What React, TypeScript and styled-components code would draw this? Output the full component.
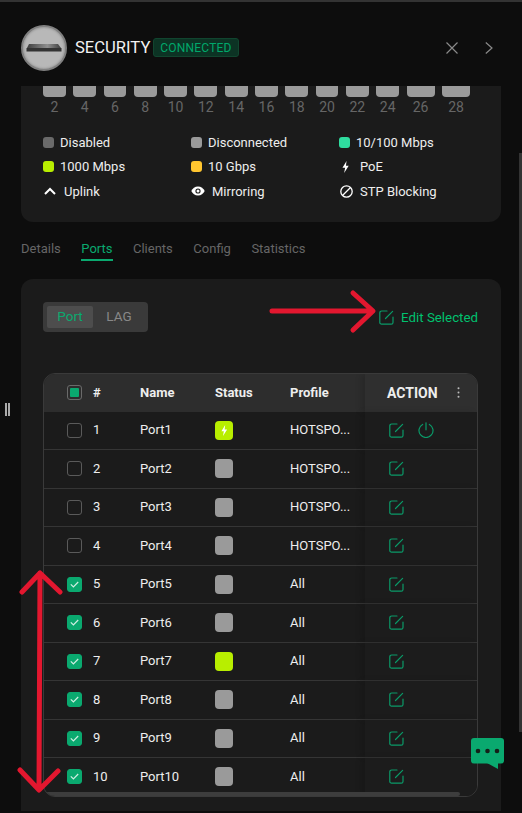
import React from "react";
import styled, { createGlobalStyle } from "styled-components";

const Global = createGlobalStyle`
  html, body { margin: 0; padding: 0; background: #0d0d0d; overflow: hidden; }
  * { box-sizing: border-box; }
`;

const Page = styled.div`
  position: relative;
  width: 522px;
  height: 813px;
  overflow: hidden;
  background: #0d0d0d;
  border-top: 2px solid #333;
  font-family: Roboto, "Liberation Sans", Arial, sans-serif;
  color: #eee;
  display: flex;
  flex-direction: column;
  padding: 0 21px 2px;
`;

const Header = styled.header`
  height: 84px;
  flex: none;
  display: flex;
  align-items: center;
  padding-top: 7px;
  padding-right: 8px;
`;
const Avatar = styled.div`
  width: 46px;
  height: 46px;
  flex: none;
  border-radius: 50%;
  background: #b8b8b8;
  border: 2px solid #808080;
  box-shadow: inset 0 0 2px 1px #9a9a9a;
  display: flex;
  align-items: center;
  justify-content: center;
`;
const Title = styled.span`
  margin-left: 8px;
  font-size: 16.6px;
  color: #f2f2f2;
`;
const Badge = styled.span`
  margin-left: 3px;
  height: 19px;
  padding: 0 6px;
  display: inline-flex;
  align-items: center;
  font-size: 12px;
  letter-spacing: 0.2px;
  color: #00a86b;
  background: #0c3324;
  border: 1px solid #11452f;
  border-radius: 3px;
`;
const HeaderActions = styled.div`
  margin-left: auto;
  display: flex;
  align-items: center;
  gap: 27px;
`;

const StatusCard = styled.section`
  flex: none;
  height: 136px;
  background: #1b1b1b;
  border-radius: 0 0 12px 12px;
  padding: 0 22px;
`;
const PortStrip = styled.div`
  display: flex;
  gap: 7.5px;
`;
const PortCol = styled.div<{ $wide?: boolean }>`
  width: ${(p) => (p.$wide ? 28 : 22.8)}px;
  display: flex;
  flex-direction: column;
  align-items: center;
`;
const PortTile = styled.div`
  width: 100%;
  height: 11px;
  background: #9a9a9a;
  border-radius: 0 0 4px 4px;
`;
const PortNum = styled.span`
  margin-top: 2px;
  font-size: 14px;
  line-height: 16px;
  color: #666;
`;
const Legend = styled.div`
  margin-top: 15px;
  display: grid;
  grid-template-columns: repeat(3, 148px);
  grid-auto-rows: 24.5px;
`;
const LegendItem = styled.div<{ $gap: number }>`
  display: flex;
  align-items: center;
  gap: ${(p) => p.$gap}px;
  font-size: 13px;
  color: #eee;
`;
const Swatch = styled.span<{ $c: string }>`
  width: 11px;
  height: 11px;
  border-radius: 3px;
  background: ${(p) => p.$c};
  flex: none;
`;
const LegendIcon = styled.span`
  width: 14px;
  height: 14px;
  flex: none;
  display: flex;
  align-items: center;
  justify-content: center;
`;

const Tabs = styled.nav`
  flex: none;
  margin-top: 18px;
  height: 39px;
  display: flex;
  gap: 20.5px;
  align-items: flex-start;
`;
const Tab = styled.span<{ $active?: boolean }>`
  font-size: 13px;
  line-height: 16px;
  padding-top: 1px;
  height: 21px;
  color: ${(p) => (p.$active ? "#0aa96f" : "#666")};
  border-bottom: 2px solid ${(p) => (p.$active ? "#0aa96f" : "transparent")};
`;

const Panel = styled.section`
  flex: 1;
  background: #1b1b1b;
  border-radius: 12px 12px 0 0;
  padding: 23px 23px 0 22px;
`;
const Toolbar = styled.div`
  display: flex;
  justify-content: space-between;
  align-items: center;
  height: 30px;
`;
const Segmented = styled.div`
  width: 105px;
  height: 30px;
  padding: 4px;
  border-radius: 4px;
  background: #3a3a3a;
  display: flex;
  align-items: stretch;
`;
const Segment = styled.span<{ $active?: boolean }>`
  width: 46px;
  display: flex;
  align-items: center;
  justify-content: center;
  font-size: 13.5px;
  border-radius: 2px;
  padding-bottom: 3px;
  color: ${(p) => (p.$active ? "#0aa96f" : "#888")};
  background: ${(p) => (p.$active ? "#4d4d4d" : "transparent")};
`;
const SegmentRest = styled(Segment)`
  width: 50px;
  padding-left: 2px;
`;
const EditSelected = styled.button`
  all: unset;
  display: flex;
  align-items: center;
  gap: 7px;
  font-size: 13.3px;
  color: #00c26f;
  font-family: inherit;
  margin-top: 1px;
`;

const Table = styled.div`
  margin-top: 41px;
  height: 424px;
  border: 1px solid #3a3a3a;
  border-radius: 12px;
  overflow: hidden;
  position: relative;
`;
const cols = "49px 47px 75px 75px 75px 1fr";
const HeadRow = styled.div`
  height: 37.5px;
  display: grid;
  grid-template-columns: ${cols};
  align-items: center;
  background: #2d2d2d;
  font-size: 13px;
  font-weight: 700;
  color: #eee;
`;
const Row = styled.div`
  height: 38.5px;
  display: grid;
  grid-template-columns: ${cols};
  align-items: center;
  border-bottom: 1px solid #353535;
  font-size: 13px;
  color: #eee;
  &:last-of-type { border-bottom: none; }
`;
const Cell = styled.span`
  padding-bottom: 1px;
`;
const CheckCell = styled.div`
  padding-left: 23px;
  display: flex;
  align-items: center;
`;
const Check = styled.span<{ $on?: boolean }>`
  width: 15px;
  height: 15px;
  border-radius: 3px;
  display: flex;
  align-items: center;
  justify-content: center;
  background: ${(p) => (p.$on ? "#0aa96f" : "transparent")};
  border: 1px solid ${(p) => (p.$on ? "#0aa96f" : "#5a5a5a")};
`;
const CheckMixed = styled.span`
  width: 15px;
  height: 15px;
  border-radius: 3px;
  display: flex;
  align-items: center;
  justify-content: center;
  border: 1px solid #6a6a6a;
  &::after {
    content: "";
    width: 9px;
    height: 9px;
    background: #0aa96f;
    border-radius: 1px;
  }
`;
const Status = styled.span<{ $c: string }>`
  width: 18px;
  height: 19px;
  border-radius: 4px;
  background: ${(p) => p.$c};
  display: flex;
  align-items: center;
  justify-content: center;
`;
const ActionHead = styled.div`
  height: 100%;
  display: flex;
  align-items: center;
  padding-left: 22px;
  gap: 19px;
  font-size: 14px;
  background: #2f2f2f;
  box-shadow: -4px 0 6px rgba(0, 0, 0, 0.12);
`;
const ActionCell = styled.div`
  height: 100%;
  display: flex;
  align-items: center;
  padding-left: 24px;
  gap: 14px;
  background: #1c1c1c;
  box-shadow: -4px 0 6px rgba(0, 0, 0, 0.12);
`;
const HScroll = styled.div`
  position: absolute;
  left: 0;
  bottom: 0;
  width: 416px;
  height: 4px;
  background: #3d3d3d;
  border-radius: 0 2px 2px 0;
`;

const PageThumb = styled.div`
  position: absolute;
  right: 0;
  top: 151px;
  width: 3px;
  height: 579px;
  background: #333;
`;
const Handle = styled.div`
  position: absolute;
  left: 5px;
  top: 401px;
  width: 5px;
  height: 13px;
  border-left: 2px solid #aaa;
  border-right: 2px solid #aaa;
`;
const ChatButton = styled.div`
  position: absolute;
  left: 471px;
  top: 736px;
`;
const Overlay = styled.svg`
  position: absolute;
  left: 0;
  top: -2px;
  pointer-events: none;
`;

const EditIcon = () => (
  <svg width="15" height="15" viewBox="0 0 15 15" fill="none" stroke="#0a9a68" strokeWidth="1.2" strokeLinecap="round">
    <path d="M8 1H2.600A1.800 1.800 0 0 0 .8 2.800v9.600a1.800 1.800 0 0 0 1.800 1.800h9.600a1.800 1.800 0 0 0 1.800-1.800V7" />
    <path d="M6.500 8.500 13.600 1.400" />
  </svg>
);
const PowerIcon = () => (
  <svg width="16" height="16" viewBox="0 0 16 16" fill="none" stroke="#0a9a68" strokeWidth="1.2" strokeLinecap="round">
    <path d="M8 .8v7" />
    <path d="M4.600 2.400a7 7 0 1 0 6.800 0" />
  </svg>
);
const Bolt = ({ c, h }: { c: string; h: number }) => (
  <svg width={h * 0.6} height={h} viewBox="0 0 6 10" fill={c}>
    <path d="M3.800 0 .4 5.600h2.200L1.800 10l3.800-6H3.300z" />
  </svg>
);
const CheckMark = () => (
  <svg width="9" height="7" viewBox="0 0 9 7" fill="none" stroke="#cfeee2" strokeWidth="1.2">
    <path d="M.8 3.400 3.400 6 8.200 1" />
  </svg>
);
const KebabIcon = () => (
  <svg width="3" height="11" viewBox="0 0 3 11" fill="#bbb">
    <circle cx="1.500" cy="1.300" r="1" />
    <circle cx="1.500" cy="5.500" r="1" />
    <circle cx="1.500" cy="9.700" r="1" />
  </svg>
);

const portNums = [2, 4, 6, 8, 10, 12, 14, 16, 18, 20, 22, 24, 26, 28];
const GREY = "#9a9a9a";
const LIME = "#b8ee00";
const rows = [
  { n: 1, profile: "HOTSPO...", c: LIME, on: false, poe: true },
  { n: 2, profile: "HOTSPO...", c: GREY, on: false },
  { n: 3, profile: "HOTSPO...", c: GREY, on: false },
  { n: 4, profile: "HOTSPO...", c: GREY, on: false },
  { n: 5, profile: "All", c: GREY, on: true },
  { n: 6, profile: "All", c: GREY, on: true },
  { n: 7, profile: "All", c: LIME, on: true },
  { n: 8, profile: "All", c: GREY, on: true },
  { n: 9, profile: "All", c: GREY, on: true },
  { n: 10, profile: "All", c: GREY, on: true },
];

export default function App() {
  return (
    <Page>
      <Global />
      <Header>
        <Avatar>
          <svg width="36" height="8" viewBox="0 0 36 8">
            <defs>
              <linearGradient id="sw" x1="0" x2="1" y1="0" y2="0">
                <stop offset="0" stopColor="#3f3f3f" />
                <stop offset="0.6" stopColor="#8f8f8f" />
                <stop offset="1" stopColor="#3f3f3f" />
              </linearGradient>
            </defs>
            <path d="M3 0h29l3 4H1z" fill="url(#sw)" />
            <rect x="0.500" y="4" width="35" height="3.500" fill="#333" />
          </svg>
        </Avatar>
        <Title>SECURITY</Title>
        <Badge>CONNECTED</Badge>
        <HeaderActions>
          <svg width="12" height="12" viewBox="0 0 12 12" stroke="#8a8a8a" strokeWidth="1.200" fill="none">
            <path d="M.5.5l11 11M11.500.5l-11 11" />
          </svg>
          <svg width="8" height="12" viewBox="0 0 8 12" stroke="#8a8a8a" strokeWidth="1.200" fill="none">
            <path d="M.8.5 7 6 .8 11.500" />
          </svg>
        </HeaderActions>
      </Header>

      <StatusCard>
        <PortStrip>
          {portNums.map((n) => (
            <PortCol key={n} $wide={n >= 26}>
              <PortTile />
              <PortNum>{n}</PortNum>
            </PortCol>
          ))}
        </PortStrip>
        <Legend>
          <LegendItem $gap={6}><Swatch $c="#6a6a6a" />Disabled</LegendItem>
          <LegendItem $gap={6}><Swatch $c="#9a9a9a" />Disconnected</LegendItem>
          <LegendItem $gap={6}><Swatch $c="#2fdc9f" />10/100 Mbps</LegendItem>
          <LegendItem $gap={6}><Swatch $c="#b8ee00" />1000 Mbps</LegendItem>
          <LegendItem $gap={6}><Swatch $c="#ffc52f" />10 Gbps</LegendItem>
          <LegendItem $gap={7}><LegendIcon><Bolt c="#fff" h={12} /></LegendIcon>PoE</LegendItem>
          <LegendItem $gap={7}>
            <LegendIcon>
              <svg width="12" height="8" viewBox="0 0 12 8" fill="none" stroke="#fff" strokeWidth="2"><path d="M1 7l5-5 5 5" /></svg>
            </LegendIcon>
            Uplink
          </LegendItem>
          <LegendItem $gap={7}>
            <LegendIcon>
              <svg width="14" height="10" viewBox="0 0 14 10">
                <path d="M7 .5C4 .5 1.500 2.500.3 5 1.500 7.500 4 9.500 7 9.500S12.500 7.500 13.700 5C12.500 2.500 10 .5 7 .5z" fill="#fff" />
                <circle cx="7" cy="5" r="2.600" fill="#1b1b1b" />
                <circle cx="7" cy="5" r="1.500" fill="#fff" />
              </svg>
            </LegendIcon>
            Mirroring
          </LegendItem>
          <LegendItem $gap={7}>
            <LegendIcon>
              <svg width="13" height="13" viewBox="0 0 13 13" fill="none" stroke="#fff" strokeWidth="1.300">
                <circle cx="6.500" cy="6.500" r="5.700" /><path d="M2.500 10.500l8-8" />
              </svg>
            </LegendIcon>
            STP Blocking
          </LegendItem>
        </Legend>
      </StatusCard>

      <Tabs>
        <Tab>Details</Tab>
        <Tab $active>Ports</Tab>
        <Tab>Clients</Tab>
        <Tab>Config</Tab>
        <Tab>Statistics</Tab>
      </Tabs>

      <Panel>
        <Toolbar>
          <Segmented>
            <Segment $active>Port</Segment>
            <SegmentRest>LAG</SegmentRest>
          </Segmented>
          <EditSelected><EditIcon />Edit Selected</EditSelected>
        </Toolbar>
        <Table>
          <HeadRow>
            <CheckCell><CheckMixed /></CheckCell>
            <span>#</span>
            <span>Name</span>
            <span>Status</span>
            <span>Profile</span>
            <ActionHead>ACTION<KebabIcon /></ActionHead>
          </HeadRow>
          {rows.map((r) => (
            <Row key={r.n}>
              <CheckCell><Check $on={r.on}>{r.on && <CheckMark />}</Check></CheckCell>
              <Cell>{r.n}</Cell>
              <Cell>Port{r.n}</Cell>
              <Status $c={r.c}>{r.poe && <Bolt c="#fff" h={11} />}</Status>
              <Cell>{r.profile}</Cell>
              <ActionCell>
                <EditIcon />
                {r.poe && <PowerIcon />}
              </ActionCell>
            </Row>
          ))}
          <HScroll />
        </Table>
      </Panel>

      <PageThumb />
      <Handle />
      <ChatButton>
        <svg width="34" height="34" viewBox="0 0 34 34">
          <rect x="0" y="0" width="33" height="25.500" rx="3" fill="#0aa96f" />
          <path d="M16 25h11v6z" fill="#0aa96f" />
          <circle cx="7" cy="13" r="2.300" fill="#152019" />
          <circle cx="16.500" cy="13" r="2.300" fill="#152019" />
          <circle cx="26" cy="13" r="2.300" fill="#152019" />
        </svg>
      </ChatButton>
      <Overlay width="522" height="813" viewBox="0 0 522 813" fill="none" stroke="#e3172f" strokeWidth="5" strokeLinecap="round" strokeLinejoin="round">
        <path d="M272 311h100M353 293l20 18-20 19" />
        <path d="M40 573 39 790M22 592l18-19 20 19M20 770l19 20 19-19" />
      </Overlay>
    </Page>
  );
}
